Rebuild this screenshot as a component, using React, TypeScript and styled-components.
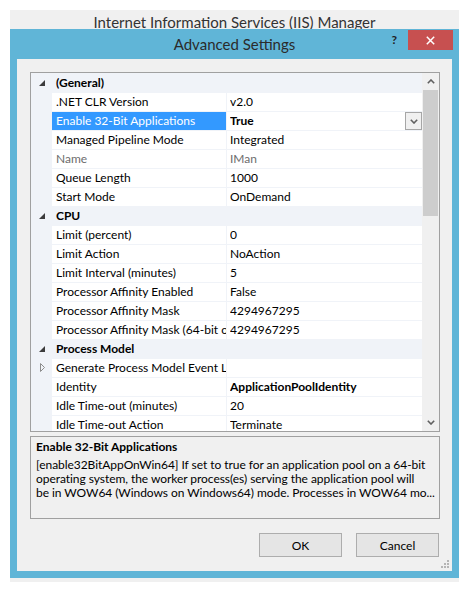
import React from "react";
import styled, { createGlobalStyle } from "styled-components";

const FONT = `Lato, "Noto Sans", "DejaVu Sans", sans-serif`;
const LINE = "#f0f3f8";

const GlobalStyle = createGlobalStyle`
  html, body { margin: 0; padding: 0; background: #ffffff; }
  body { font-family: ${FONT}; -webkit-font-smoothing: antialiased; }
  * { box-sizing: border-box; }
`;

const Desktop = styled.div`
  padding: 10px 10px 10px 10px;
  width: 469px;
`;

const BackWindow = styled.div`
  width: 449px;
  background: #f0f0f0;
  padding-bottom: 4px;
`;

const BackTitle = styled.div`
  height: 19px;
  overflow: hidden;
  text-align: center;
  font-size: 15px;
  line-height: 24px;
  color: #333333;
`;

const Dialog = styled.div`
  background: #60b5d7;
  padding: 0 7px 7px 7px;
`;

const TitleBar = styled.div`
  height: 30px;
  display: grid;
  grid-template-columns: 1fr auto 1fr;
  align-items: start;
`;

const TitleText = styled.div`
  grid-column: 2;
  font-size: 15px;
  line-height: 30px;
  color: #2b2b2b;
`;

const TitleButtons = styled.div`
  grid-column: 3;
  display: flex;
  justify-content: flex-end;
  align-items: flex-start;
  margin-right: -1px;
`;

const HelpButton = styled.div`
  font-size: 12px;
  font-weight: 700;
  color: #222;
  line-height: 20px;
  margin-top: 1px;
  margin-right: 11px;
`;

const CloseButton = styled.div`
  width: 45px;
  height: 20px;
  margin-top: 1px;
  background: #c75050;
  display: flex;
  align-items: center;
  justify-content: center;
`;

const Content = styled.div`
  position: relative;
  background: #f0f0f0;
  padding: 13px 12px 14px 13px;
  display: flex;
  flex-direction: column;
  font-size: 12px;
  color: #000;
`;

const PropertyGrid = styled.div`
  height: 360px;
  border: 1px solid #a0a0a0;
  background: #ffffff;
  display: flex;
  overflow: hidden;
`;

const GridRows = styled.div`
  flex: 1;
  overflow: hidden;
  display: flex;
  flex-direction: column;
`;

const Row = styled.div<{ $category?: boolean }>`
  flex: none;
  height: 19px;
  background: ${LINE};
  display: grid;
  grid-template-columns: ${(p) => (p.$category ? "21px 1fr" : "21px 175px 1fr")};
  padding-top: ${(p) => (p.$category ? "0" : "1px")};
`;

const MarginCell = styled.div<{ $category?: boolean }>`
  display: flex;
  align-items: center;
  justify-content: center;
  margin-top: ${(p) => (p.$category ? "0" : "-1px")};
  padding-left: 1px;
`;

const CategoryName = styled.div`
  font-weight: 700;
  line-height: 19px;
  padding-left: 4px;
  white-space: nowrap;
  overflow: hidden;
`;

const NameCell = styled.div<{ $selected?: boolean; $disabled?: boolean }>`
  height: 18px;
  line-height: 18px;
  padding-left: 4px;
  white-space: nowrap;
  overflow: hidden;
  border-right: 1px solid ${LINE};
  background: ${(p) => (p.$selected ? "#3399ff" : "#ffffff")};
  color: ${(p) => (p.$selected ? "#ffffff" : p.$disabled ? "#6d6d6d" : "#000000")};
`;

const ValueCell = styled.div<{ $bold?: boolean; $disabled?: boolean }>`
  height: 18px;
  line-height: 18px;
  padding-left: 3px;
  display: flex;
  align-items: flex-start;
  white-space: nowrap;
  overflow: hidden;
  background: #ffffff;
  font-weight: ${(p) => (p.$bold ? 700 : 400)};
  color: ${(p) => (p.$disabled ? "#6d6d6d" : "#000000")};
`;

const ValueText = styled.span`
  flex: 1;
  overflow: hidden;
`;

const DropButton = styled.div`
  width: 17px;
  height: 18px;
  flex: none;
  border: 1px solid #a6a6a6;
  background: #f0f0f0;
  display: flex;
  align-items: center;
  justify-content: center;
`;

const ScrollBar = styled.div`
  width: 17px;
  flex: none;
  background: #f0f0f0;
  display: flex;
  flex-direction: column;
  align-items: center;
`;

const ScrollArrow = styled.div`
  height: 17px;
  width: 17px;
  flex: none;
  display: flex;
  align-items: center;
  justify-content: center;
`;

const Thumb = styled.div`
  width: 15px;
  height: 126px;
  flex: none;
  background: #cdcdcd;
`;

const Track = styled.div`
  flex: 1;
`;

const Description = styled.div`
  margin-top: 4px;
  height: 83px;
  border: 1px solid #a0a0a0;
  padding: 2px 1px 0 5px;
  overflow: hidden;
`;

const DescTitle = styled.div`
  font-weight: 700;
  line-height: 16px;
  margin-bottom: 3px;
  white-space: nowrap;
`;

const DescLine = styled.div`
  line-height: 14px;
  white-space: nowrap;
  overflow: hidden;
  letter-spacing: -0.05px;
`;

const ButtonRow = styled.div`
  margin-top: 14px;
  display: flex;
  justify-content: flex-end;
  gap: 14px;
  padding-right: 1px;
`;

const DialogButton = styled.button`
  width: 83px;
  height: 24px;
  border: 1px solid #adadad;
  background: #e5e5e5;
  font-family: ${FONT};
  font-size: 12px;
  color: #000;
  padding: 0;
`;

const SizeGrip = styled.svg`
  position: absolute;
  right: 2px;
  bottom: 2px;
`;

type Prop = {
  name: string;
  value?: string;
  category?: boolean;
  selected?: boolean;
  disabled?: boolean;
  bold?: boolean;
  expandable?: boolean;
};

const rows: Prop[] = [
  { name: "(General)", category: true },
  { name: ".NET CLR Version", value: "v2.0" },
  { name: "Enable 32-Bit Applications", value: "True", selected: true, bold: true },
  { name: "Managed Pipeline Mode", value: "Integrated" },
  { name: "Name", value: "IMan", disabled: true },
  { name: "Queue Length", value: "1000" },
  { name: "Start Mode", value: "OnDemand" },
  { name: "CPU", category: true },
  { name: "Limit (percent)", value: "0" },
  { name: "Limit Action", value: "NoAction" },
  { name: "Limit Interval (minutes)", value: "5" },
  { name: "Processor Affinity Enabled", value: "False" },
  { name: "Processor Affinity Mask", value: "4294967295" },
  { name: "Processor Affinity Mask (64-bit option)", value: "4294967295" },
  { name: "Process Model", category: true },
  { name: "Generate Process Model Event Log", value: "", expandable: true },
  { name: "Identity", value: "ApplicationPoolIdentity", bold: true },
  { name: "Idle Time-out (minutes)", value: "20" },
  { name: "Idle Time-out Action", value: "Terminate" },
];

const ExpandedGlyph = () => (
  <svg width="6" height="6" viewBox="0 0 6 6">
    <polygon points="6,0 6,6 0,6" fill="#3c3c3c" />
  </svg>
);

const CollapsedGlyph = () => (
  <svg width="5" height="9" viewBox="0 0 5 9">
    <polygon points="0.5,0.5 4.5,4.5 0.5,8.5" fill="none" stroke="#8c8c8c" strokeWidth="1" />
  </svg>
);

const Chevron = ({ up }: { up?: boolean }) => (
  <svg width="8" height="5" viewBox="0 0 8 5">
    <polyline
      points={up ? "0.8,4.2 4,1 7.2,4.2" : "0.8,0.8 4,4 7.2,0.8"}
      fill="none"
      stroke="#606060"
      strokeWidth="1.6"
    />
  </svg>
);

export default function App() {
  return (
    <>
      <GlobalStyle />
      <Desktop>
        <BackWindow>
          <BackTitle>Internet Information Services (IIS) Manager</BackTitle>
          <Dialog>
            <TitleBar>
              <TitleText>Advanced Settings</TitleText>
              <TitleButtons>
                <HelpButton>?</HelpButton>
                <CloseButton>
                  <svg width="9" height="9" viewBox="0 0 9 9">
                    <path d="M0.8 0.8 L8.2 8.2 M8.2 0.8 L0.8 8.2" stroke="#ffffff" strokeWidth="1.5" />
                  </svg>
                </CloseButton>
              </TitleButtons>
            </TitleBar>
            <Content>
              <PropertyGrid>
                <GridRows>
                  {rows.map((r, i) =>
                    r.category ? (
                      <Row key={i} $category>
                        <MarginCell $category>
                          <ExpandedGlyph />
                        </MarginCell>
                        <CategoryName>{r.name}</CategoryName>
                      </Row>
                    ) : (
                      <Row key={i}>
                        <MarginCell>{r.expandable ? <CollapsedGlyph /> : null}</MarginCell>
                        <NameCell $selected={r.selected} $disabled={r.disabled}>
                          {r.name}
                        </NameCell>
                        <ValueCell $bold={r.bold} $disabled={r.disabled}>
                          <ValueText>{r.value}</ValueText>
                          {r.selected ? (
                            <DropButton>
                              <Chevron />
                            </DropButton>
                          ) : null}
                        </ValueCell>
                      </Row>
                    )
                  )}
                </GridRows>
                <ScrollBar>
                  <ScrollArrow>
                    <Chevron up />
                  </ScrollArrow>
                  <Thumb />
                  <Track />
                  <ScrollArrow>
                    <Chevron />
                  </ScrollArrow>
                </ScrollBar>
              </PropertyGrid>
              <Description>
                <DescTitle>Enable 32-Bit Applications</DescTitle>
                <DescLine>
                  [enable32BitAppOnWin64] If set to true for an application pool on a 64-bit
                </DescLine>
                <DescLine>
                  operating system, the worker process(es) serving the application pool will
                </DescLine>
                <DescLine>
                  be in WOW64 (Windows on Windows64) mode. Processes in WOW64 mo...
                </DescLine>
              </Description>
              <ButtonRow>
                <DialogButton>OK</DialogButton>
                <DialogButton>Cancel</DialogButton>
              </ButtonRow>
              <SizeGrip width="9" height="9" viewBox="0 0 9 9">
                <rect x="6" y="0" width="2" height="2" fill="#b5b5b5" />
                <rect x="3" y="3" width="2" height="2" fill="#b5b5b5" />
                <rect x="6" y="3" width="2" height="2" fill="#b5b5b5" />
                <rect x="0" y="6" width="2" height="2" fill="#b5b5b5" />
                <rect x="3" y="6" width="2" height="2" fill="#b5b5b5" />
                <rect x="6" y="6" width="2" height="2" fill="#b5b5b5" />
              </SizeGrip>
            </Content>
          </Dialog>
        </BackWindow>
      </Desktop>
    </>
  );
}
